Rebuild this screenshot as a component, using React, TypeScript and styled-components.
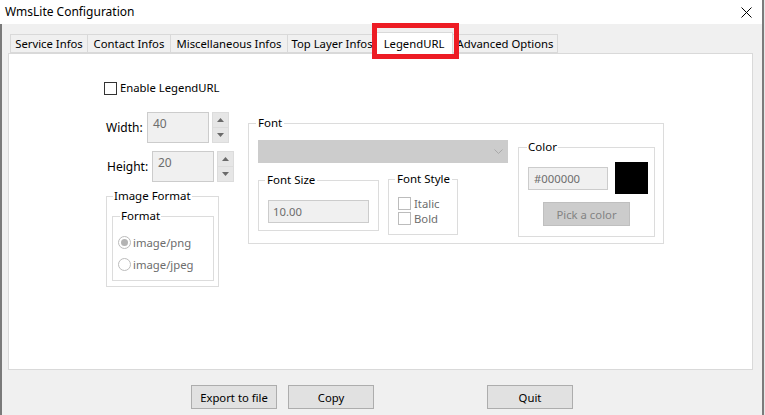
import React from "react";
import styled, { createGlobalStyle } from "styled-components";

const GlobalStyle = createGlobalStyle`
  * { box-sizing: border-box; }
  html, body { margin: 0; padding: 0; background: #e6e6e6; }
  body {
    font-family: "Noto Sans", "Open Sans", "Liberation Sans", sans-serif;
    font-size: 11.3px;
    color: #000000;
  }
`;

const Window = styled.div`
  width: 764px;
  height: 415px;
  display: flex;
  flex-direction: column;
  border-right: 2px solid #7b7b7b;
  overflow: hidden;
`;

const TitleBar = styled.div`
  height: 24px;
  flex: none;
  display: flex;
  align-items: center;
  justify-content: space-between;
  padding: 0 10px 0 5px;
  background: #ffffff;
`;

const Title = styled.span`
  font-size: 12px;
  line-height: 16px;
`;

const Body = styled.div`
  flex: 1;
  display: flex;
  flex-direction: column;
  background: #f0f0f0;
  border-left: 2px solid #7a7a7a;
  padding-left: 6px;
`;

const TabStrip = styled.div`
  position: relative;
  z-index: 1;
  display: flex;
  align-items: flex-end;
  height: 19px;
  margin-top: 10px;
  padding-left: 3px;
`;

const Tab = styled.div<{ $w: number; $active?: boolean }>`
  position: relative;
  z-index: ${(p) => (p.$active ? 2 : 1)};
  width: ${(p) => p.$w}px;
  height: ${(p) => (p.$active ? 22 : 19)}px;
  margin-left: ${(p) => (p.$active ? -2 : -1)}px;
  margin-bottom: ${(p) => (p.$active ? -1 : 0)}px;
  display: flex;
  align-items: center;
  justify-content: center;
  background: ${(p) => (p.$active ? "#ffffff" : "#f0f0f0")};
  border: 1px solid #d9d9d9;
  border-bottom: ${(p) => (p.$active ? "none" : "1px solid #d9d9d9")};
  white-space: nowrap;
  overflow: hidden;
  line-height: 16px;
`;

const Highlight = styled.div`
  position: absolute;
  z-index: 3;
  left: 364px;
  top: -11px;
  width: 87px;
  height: 36px;
  border: 5px solid #ed1c24;
  pointer-events: none;
`;

const Panel = styled.div`
  width: 745px;
  height: 317px;
  flex: none;
  background: #ffffff;
  border: 1px solid #d9d9d9;
  padding: 26px 0 0 95px;
  display: flex;
  flex-direction: column;
`;

const CheckRow = styled.label<{ $h?: number }>`
  display: flex;
  align-items: center;
  height: ${(p) => p.$h ?? 16}px;
  line-height: ${(p) => p.$h ?? 16}px;
  white-space: nowrap;
`;

const CheckBox = styled.span<{ $disabled?: boolean }>`
  width: 13px;
  height: 13px;
  flex: none;
  margin-right: 3px;
  background: #ffffff;
  border: 1px solid ${(p) => (p.$disabled ? "#bcbcbc" : "#333333")};
`;

const DimText = styled.span`
  color: #6d6d6d;
`;

const MainRow = styled.div`
  display: flex;
  align-items: flex-start;
  margin-top: 16px;
`;

const LeftCol = styled.div`
  width: 144px;
  flex: none;
  display: flex;
  flex-direction: column;
`;

const SizeRow = styled.div<{ $ml: number; $mt: number }>`
  display: flex;
  align-items: center;
  margin-left: ${(p) => p.$ml}px;
  margin-top: ${(p) => p.$mt}px;
`;

const SizeLabel = styled.span<{ $w: number }>`
  width: ${(p) => p.$w}px;
  line-height: 16px;
  font-size: 12px;
`;

const SpinField = styled.div`
  width: 62px;
  height: 31px;
  padding: 3px 0 0 5px;
  background: #f0f0f0;
  border: 1px solid #cccccc;
  color: #6d6d6d;
  line-height: 16px;
  font-size: 12px;
`;

const Spinner = styled.div`
  width: 17px;
  height: 31px;
  margin-left: 3px;
  display: flex;
  flex-direction: column;
  background: #e6e6e6;
  border: 1px solid #dcdcdc;
`;

const SpinButton = styled.div<{ $top?: boolean }>`
  flex: 1;
  display: flex;
  align-items: center;
  justify-content: center;
  border-bottom: ${(p) => (p.$top ? "1px solid #dcdcdc" : "none")};
`;

const Group = styled.fieldset<{ $w: number; $h: number; $ml?: number; $mt?: number }>`
  margin: ${(p) => p.$mt ?? 0}px 0 0 ${(p) => p.$ml ?? 0}px;
  padding: 0;
  width: ${(p) => p.$w}px;
  height: ${(p) => p.$h}px;
  flex: none;
  min-width: 0;
  border: 1px solid #dcdcdc;
`;

const Legend = styled.legend<{ $ml: number; $px?: number }>`
  margin-left: ${(p) => p.$ml}px;
  padding: 0 ${(p) => p.$px ?? 1}px;
  line-height: 16px;
  font-size: 11.5px;
`;

const GroupBody = styled.div<{ $pt: number; $pl: number }>`
  display: flex;
  flex-direction: column;
  padding: ${(p) => p.$pt}px 0 0 ${(p) => p.$pl}px;
`;

const RadioRow = styled.div<{ $mt?: number }>`
  display: flex;
  align-items: center;
  height: 16px;
  margin-top: ${(p) => p.$mt ?? 0}px;
`;

const Radio = styled.span<{ $checked?: boolean }>`
  position: relative;
  width: 13px;
  height: 13px;
  margin-right: 2px;
  flex: none;
  border-radius: 50%;
  border: 1px solid #bcbcbc;
  background: #ffffff;

  &::after {
    content: "";
    display: ${(p) => (p.$checked ? "block" : "none")};
    position: absolute;
    left: 2px;
    top: 2px;
    width: 7px;
    height: 7px;
    border-radius: 50%;
    background: #b4b4b4;
  }
`;

const FontRow = styled.div`
  display: flex;
  align-items: flex-start;
  padding: 9px 0 0 9px;
`;

const FontLeft = styled.div`
  width: 250px;
  flex: none;
  display: flex;
  flex-direction: column;
`;

const Combo = styled.div`
  width: 250px;
  height: 23px;
  display: flex;
  align-items: center;
  justify-content: flex-end;
  padding-right: 4px;
  background: #cccccc;
  border: 1px solid #cccccc;
`;

const SubRow = styled.div`
  display: flex;
  align-items: flex-start;
  margin-top: 9px;
`;

const FlatField = styled.div<{ $w: number; $pl?: number }>`
  width: ${(p) => p.$w}px;
  height: 23px;
  display: flex;
  align-items: center;
  padding-left: ${(p) => p.$pl ?? 4}px;
  background: #f0f0f0;
  border: 1px solid #cccccc;
  color: #6d6d6d;
`;

const ColorRow = styled.div`
  display: flex;
  align-items: center;
`;

const Swatch = styled.div`
  width: 33px;
  height: 32px;
  margin-left: 7px;
  background: #000000;
`;

const PickButton = styled.div`
  width: 87px;
  height: 24px;
  margin: 8px 0 0 15px;
  display: flex;
  align-items: center;
  justify-content: center;
  background: #cccccc;
  border: 1px solid #bfbfbf;
  color: #838383;
`;

const Footer = styled.div`
  display: flex;
  padding: 15px 0 0 183px;
`;

const Button = styled.div<{ $ml?: number }>`
  width: 86px;
  height: 24px;
  margin-left: ${(p) => p.$ml ?? 0}px;
  display: flex;
  align-items: center;
  justify-content: center;
  background: #e1e1e1;
  border: 1px solid #adadad;
`;

const CloseIcon = () => (
  <svg width="11" height="11" viewBox="0 0 11 11">
    <path d="M0.5 0.5 L10.5 10.5 M10.5 0.5 L0.5 10.5" stroke="#000" strokeWidth="1" />
  </svg>
);

const Arrow = ({ up }: { up?: boolean }) => (
  <svg width="7" height="4" viewBox="0 0 7 4">
    <path d={up ? "M0 4 L3.5 0 L7 4 Z" : "M0 0 L3.5 4 L7 0 Z"} fill="#6a6a6a" />
  </svg>
);

const Chevron = () => (
  <svg width="9" height="5" viewBox="0 0 9 5">
    <polyline points="0.5,0.5 4.5,4.5 8.5,0.5" fill="none" stroke="#a9a9a9" strokeWidth="1" />
  </svg>
);

const tabs = [
  { label: "Service Infos", w: 78 },
  { label: "Contact Infos", w: 84 },
  { label: "Miscellaneous Infos", w: 118 },
  { label: "Top Layer Infos", w: 90 },
  { label: "LegendURL", w: 78, active: true },
  { label: "Advanced Options", w: 106 },
];

const SizeInput = ({ label, value, labelW, ml, mt }: { label: string; value: string; labelW: number; ml: number; mt: number }) => (
  <SizeRow $ml={ml} $mt={mt}>
    <SizeLabel $w={labelW}>{label}</SizeLabel>
    <SpinField>{value}</SpinField>
    <Spinner>
      <SpinButton $top>
        <Arrow up />
      </SpinButton>
      <SpinButton>
        <Arrow />
      </SpinButton>
    </Spinner>
  </SizeRow>
);

export default function App() {
  return (
    <>
      <GlobalStyle />
      <Window>
        <TitleBar>
          <Title>WmsLite Configuration</Title>
          <CloseIcon />
        </TitleBar>
        <Body>
          <TabStrip>
            {tabs.map((t) => (
              <Tab key={t.label} $w={t.w} $active={t.active}>
                {t.label}
              </Tab>
            ))}
            <Highlight />
          </TabStrip>
          <Panel>
            <CheckRow>
              <CheckBox />
              Enable LegendURL
            </CheckRow>
            <MainRow>
              <LeftCol>
                <SizeInput label="Width:" value="40" labelW={41} ml={2} mt={0} />
                <SizeInput label="Height:" value="20" labelW={45} ml={3} mt={8} />
                <Group $w={113} $h={99} $ml={2} $mt={6}>
                  <Legend $ml={6}>Image Format</Legend>
                  <Group $w={102} $h={73} $ml={5} $mt={4}>
                    <Legend $ml={7}>Format</Legend>
                    <GroupBody $pt={10} $pl={5}>
                      <RadioRow>
                        <Radio $checked />
                        <DimText>image/png</DimText>
                      </RadioRow>
                      <RadioRow $mt={6}>
                        <Radio />
                        <DimText>image/jpeg</DimText>
                      </RadioRow>
                    </GroupBody>
                  </Group>
                </Group>
              </LeftCol>
              <Group $w={416} $h={129} $mt={3}>
                <Legend $ml={7} $px={2}>Font</Legend>
                <FontRow>
                  <FontLeft>
                    <Combo>
                      <Chevron />
                    </Combo>
                    <SubRow>
                      <Group $w={121} $h={59}>
                        <Legend $ml={6} $px={2}>Font Size</Legend>
                        <GroupBody $pt={12} $pl={9}>
                          <FlatField $w={101}>10.00</FlatField>
                        </GroupBody>
                      </Group>
                      <Group $w={70} $h={64} $ml={9} $mt={-1}>
                        <Legend $ml={6} $px={2}>Font Style</Legend>
                        <GroupBody $pt={9} $pl={9}>
                          <CheckRow $h={15}>
                            <CheckBox $disabled />
                            <DimText>Italic</DimText>
                          </CheckRow>
                          <CheckRow $h={15}>
                            <CheckBox $disabled />
                            <DimText>Bold</DimText>
                          </CheckRow>
                        </GroupBody>
                      </Group>
                    </SubRow>
                  </FontLeft>
                  <Group $w={137} $h={98} $ml={10} $mt={-1}>
                    <Legend $ml={8}>Color</Legend>
                    <GroupBody $pt={7} $pl={9}>
                      <ColorRow>
                        <FlatField $w={80} $pl={5}>#000000</FlatField>
                        <Swatch />
                      </ColorRow>
                      <PickButton>Pick a color</PickButton>
                    </GroupBody>
                  </Group>
                </FontRow>
              </Group>
            </MainRow>
          </Panel>
          <Footer>
            <Button>Export to file</Button>
            <Button $ml={11}>Copy</Button>
            <Button $ml={113}>Quit</Button>
          </Footer>
        </Body>
      </Window>
    </>
  );
}
